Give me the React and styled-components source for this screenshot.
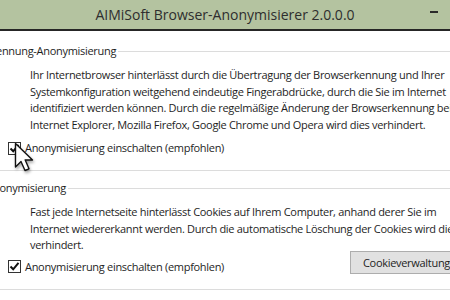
import React from 'react'
import styled, { createGlobalStyle } from 'styled-components';

const GlobalStyle = createGlobalStyle`
  html, body {
    margin: 0;
    padding: 0;
    background: #ffffff;
    overflow: hidden;
  }
  body {
    font-family: "Open Sans", "Noto Sans", sans-serif;
    color: #1e1e1e;
  }
`;

const groups = [
    {
        title: 'Browserkennung-Anonymisierung',
        lines: [
            'Ihr Internetbrowser hinterlässt durch die Übertragung der Browserkennung und Ihrer',
            'Systemkonfiguration weitgehend eindeutige Fingerabdrücke, durch die Sie im Internet',
            'identifiziert werden können. Durch die regelmäßige Änderung der Browserkennung bei',
            'Internet Explorer, Mozilla Firefox, Google Chrome und Opera wird dies verhindert.',
        ],
        cursor: true,
    },
    {
        title: 'Cookie-Anonymisierung',
        lines: [
            'Fast jede Internetseite hinterlässt Cookies auf Ihrem Computer, anhand derer Sie im',
            'Internet wiedererkannt werden. Durch die automatische Löschung der Cookies wird dies',
            'verhindert.',
        ],
        button: 'Cookieverwaltung',
    },
];

const Cursor = () => (
    <CursorStyled width="22" height="32" viewBox="0 0 22 32">
        <path
            d="M1.5 1.5 L1.5 25 L7 19.5 L11 28.5 L15 26.8 L11.2 18 L18.5 18 Z"
            fill="#ffffff"
            stroke="#111111"
            strokeWidth="1.4"
            strokeLinejoin="round"
        />
    </CursorStyled>
);

const CheckRow = ({ label, children, cursor, tight }) => (
    <Row $tight={tight}>
        <Label>
            <Box>
                <svg width="11" height="11" viewBox="0 0 11 11">
                    <path d="M1.5 5.5 L4.2 8.3 L9.5 1.8" fill="none" stroke="#111" strokeWidth="2" />
                </svg>
                {cursor && <Cursor />}
            </Box>
            {label}
        </Label>
        {children}
    </Row>
);

const App = () => {
    return (
        <Window>
            <GlobalStyle />
            <TitleBar>
                <span />
                <Title>AIMiSoft Browser-Anonymisierer 2.0.0.0</Title>
                <Minimize />
            </TitleBar>
            <Client>
                {groups.map((g) => (
                    <Group key={g.title}>
                        <Legend>{g.title}</Legend>
                        <Text>
                            {g.lines.map((l, i) => (
                                <React.Fragment key={i}>{l}<br /></React.Fragment>
                            ))}
                        </Text>
                        <CheckRow
                            label="Anonymisierung einschalten (empfohlen)"
                            cursor={g.cursor}
                            tight={!!g.button}
                        >
                            {g.button && <Button>{g.button}</Button>}
                        </CheckRow>
                    </Group>
                ))}
                <Group>
                    <Legend>Werbeblocker und Tracking-Schutz</Legend>
                    <Text>&nbsp;</Text>
                </Group>
            </Client>
        </Window>
    )
}

const Window = styled.div`
    width: 450px;
    height: 300px;
    overflow: hidden;
    background: #fff;
`;

const TitleBar = styled.div`
    height: 29px;
    background: #b4c3a0;
    border-bottom: 2px solid #262626;
    display: grid;
    grid-template-columns: 1fr auto 1fr;
    align-items: center;
`;

const Title = styled.div`
    font-family: "Open Sans", "Noto Sans", sans-serif;
    font-size: 14px;
    color: #2e2e2e;
    white-space: nowrap;
    padding-bottom: 1px;
`;

const Minimize = styled.div`
    justify-self: end;
    width: 8px;
    height: 2px;
    margin-right: 12px;
    margin-bottom: 5px;
    background: #2a2a2a;
`;

const Client = styled.div`
    width: 590px;
    margin-left: -65px;
    padding-top: 12px;
    letter-spacing: -0.3px;
`;

const Group = styled.fieldset`
    margin: 0 0 9px 4px;
    padding: 0 0 15px 68px;
    border: 1px solid #dcdcdc;
    min-width: 0;
`;

const Legend = styled.legend`
    margin-left: -60px;
    padding: 0 2px;
    font-size: 11px;
    line-height: 16px;
    color: #1e1e1e;
    white-space: nowrap;
`;

const Text = styled.p`
    margin: 8px 0 0 22px;
    font-size: 11px;
    line-height: 16.5px;
    white-space: nowrap;
    color: #1e1e1e;
`;

const Row = styled.div`
    display: flex;
    align-items: flex-end;
    justify-content: space-between;
    margin-top: ${(p) => (p.$tight ? '-3px' : '6px')};
    padding-right: 61px;
    min-height: 16px;
`;

const Label = styled.label`
    display: flex;
    align-items: center;
    gap: 4px;
    font-size: 11px;
    line-height: 16px;
    white-space: nowrap;
    margin-bottom: -1px;
`;

const Box = styled.span`
    position: relative;
    width: 11px;
    height: 11px;
    border: 1px solid #333;
    background: #fff;
    display: flex;
    align-items: center;
    justify-content: center;
`;

const CursorStyled = styled.svg`
    position: absolute;
    left: 5px;
    top: -1px;
    filter: drop-shadow(1px 2px 1.5px rgba(0, 0, 0, 0.35));
`;

const Button = styled.button`
    height: 23px;
    padding: 0 12px;
    font-family: "Open Sans", "Noto Sans", sans-serif;
    font-size: 11px;
    letter-spacing: -0.3px;
    color: #1e1e1e;
    background: #e1e1e1;
    border: 1px solid #adadad;
    border-radius: 0;
`;

export default App
